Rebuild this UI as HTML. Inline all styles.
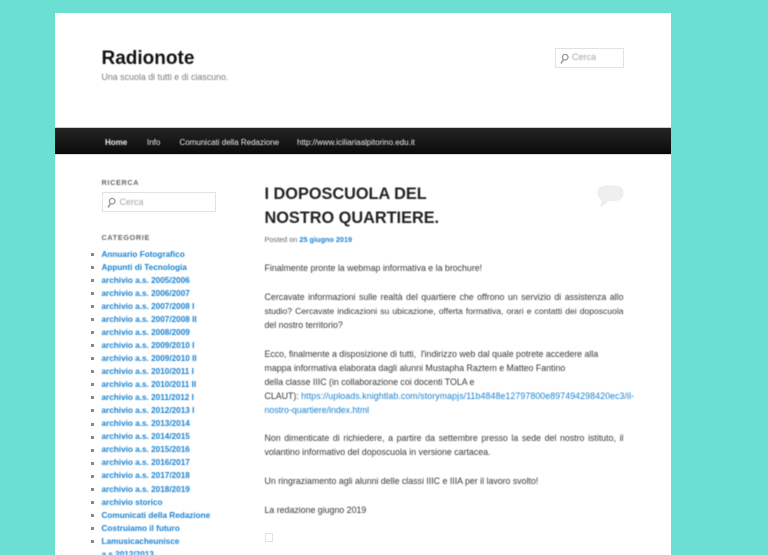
<!DOCTYPE html>
<html><head><meta charset="utf-8"><style>
html,body{margin:0;padding:0;width:768px;height:555px;overflow:hidden;background:#6adfd2;font-family:"Liberation Sans",Arial,sans-serif;}
#r{position:absolute;left:0;top:0;width:768px;height:555px;overflow:hidden;}
#w{position:absolute;left:55px;top:13px;width:615.5px;height:542px;background:#fff;}
.t{position:absolute;white-space:nowrap;filter:blur(.4px);}
.p{position:absolute;left:264.5px;width:359px;font-size:8.8px;line-height:14.5px;color:#373737;white-space:nowrap;filter:blur(.4px);}
.j{white-space:normal;text-align:justify;text-align-last:justify;}
a{color:#1982d1;text-decoration:none;}
#nav{position:absolute;left:55px;top:127px;width:615.5px;height:28px;background:linear-gradient(#252525,#0a0a0a);border-top:1px solid #ccc;border-bottom:1px solid #ddd;box-sizing:border-box;}
.n{position:absolute;top:136.5px;font-size:8px;line-height:11px;color:#eee;white-space:nowrap;filter:blur(.4px);}
.box{position:absolute;box-sizing:border-box;border:1px solid #e2e2e2;background:#fff;}
.h{position:absolute;left:101.5px;font-size:7.2px;font-weight:bold;letter-spacing:.7px;color:#666;line-height:10px;filter:blur(.4px);}
.l{position:absolute;left:101.5px;margin-top:.8px;font-size:8.2px;font-weight:bold;color:#1982d1;line-height:12px;white-space:nowrap;filter:blur(.4px);}
.b{position:absolute;left:91px;width:3px;height:3px;background:#888;}
.c{position:absolute;font-size:9px;line-height:11px;color:#a5a5a5;filter:blur(.4px);}
</style></head><body><div id="r">
<div id="w"></div>
<div class="t" style="left:101.5px;top:46.500px;font-size:19px;font-weight:bold;line-height:24px;color:#111;">Radionote</div>
<div class="t" style="left:101.5px;top:70.5px;font-size:8.85px;line-height:12px;color:#7a7a7a;">Una scuola di tutti e di ciascuno.</div>
<div class="box" style="left:555px;top:48px;width:69px;height:20px;"></div>
<svg style="position:absolute;left:559px;top:52.5px" width="11" height="12" viewBox="0 0 11 12"><circle cx="6.2" cy="4.2" r="2.8" fill="none" stroke="#999" stroke-width="1.3"/><path d="M4.3 6.8L2 10.5" stroke="#999" stroke-width="1.6"/></svg>
<div class="c" style="left:572px;top:52px;">Cerca</div>
<div id="nav"></div>
<div class="n" style="left:105px;font-weight:bold;">Home</div>
<div class="n" style="left:147px;">Info</div>
<div class="n" style="left:179.5px;">Comunicati della Redazione</div>
<div class="n" style="left:297px;">http://www.iciliariaalpitorino.edu.it</div>

<div class="h" style="top:178px;">RICERCA</div>
<div class="box" style="left:101.5px;top:192px;width:114px;height:19.5px;"></div>
<svg style="position:absolute;left:106px;top:196.5px" width="11" height="12" viewBox="0 0 11 12"><circle cx="6.2" cy="4.2" r="2.8" fill="none" stroke="#999" stroke-width="1.3"/><path d="M4.3 6.8L2 10.5" stroke="#999" stroke-width="1.6"/></svg>
<div class="c" style="left:119.5px;top:196.5px;">Cerca</div>
<div class="h" style="top:233px;">CATEGORIE</div>

<div class="b" style="top:252.5px"></div><div class="l" style="top:248px">Annuario Fotografico</div>
<div class="b" style="top:265.5px"></div><div class="l" style="top:261px">Appunti di Tecnologia</div>
<div class="b" style="top:278.5px"></div><div class="l" style="top:274px">archivio a.s. 2005/2006</div>
<div class="b" style="top:291.5px"></div><div class="l" style="top:287px">archivio a.s. 2006/2007</div>
<div class="b" style="top:304.5px"></div><div class="l" style="top:300px">archivio a.s. 2007/2008 I</div>
<div class="b" style="top:317.5px"></div><div class="l" style="top:313px">archivio a.s. 2007/2008 II</div>
<div class="b" style="top:331px"></div><div class="l" style="top:326px">archivio a.s. 2008/2009</div>
<div class="b" style="top:344px"></div><div class="l" style="top:339px">archivio a.s. 2009/2010 I</div>
<div class="b" style="top:357px"></div><div class="l" style="top:352px">archivio a.s. 2009/2010 II</div>
<div class="b" style="top:370px"></div><div class="l" style="top:365px">archivio a.s. 2010/2011 I</div>
<div class="b" style="top:383px"></div><div class="l" style="top:378.5px">archivio a.s. 2010/2011 II</div>
<div class="b" style="top:396px"></div><div class="l" style="top:391.5px">archivio a.s. 2011/2012 I</div>
<div class="b" style="top:409px"></div><div class="l" style="top:404.5px">archivio a.s. 2012/2013 I</div>
<div class="b" style="top:422.5px"></div><div class="l" style="top:417.5px">archivio a.s. 2013/2014</div>
<div class="b" style="top:435.5px"></div><div class="l" style="top:430.5px">archivio a.s. 2014/2015</div>
<div class="b" style="top:448.5px"></div><div class="l" style="top:443.5px">archivio a.s. 2015/2016</div>
<div class="b" style="top:461.5px"></div><div class="l" style="top:456.5px">archivio a.s. 2016/2017</div>
<div class="b" style="top:474.5px"></div><div class="l" style="top:469.5px">archivio a.s. 2017/2018</div>
<div class="b" style="top:487.5px"></div><div class="l" style="top:483px">archivio a.s. 2018/2019</div>
<div class="b" style="top:501px"></div><div class="l" style="top:496px">archivio storico</div>
<div class="b" style="top:514px"></div><div class="l" style="top:509px">Comunicati della Redazione</div>
<div class="b" style="top:527px"></div><div class="l" style="top:522px">Costruiamo il futuro</div>
<div class="b" style="top:540px"></div><div class="l" style="top:535px">Lamusicacheunisce</div>
<div class="l" style="top:548px;">a.s 2012/2013</div>

<div class="t" style="left:264.5px;top:182px;font-size:16.3px;font-weight:bold;line-height:24px;color:#222;">I DOPOSCUOLA DEL</div>
<div class="t" style="left:264.5px;top:206px;font-size:16.3px;font-weight:bold;line-height:24px;color:#222;">NOSTRO QUARTIERE.</div>
<svg style="position:absolute;left:597px;top:185px" width="27" height="23" viewBox="0 0 27 23"><path d="M9 1H18C23 1 26 4 26 8C26 12.500 23 15.500 18 15.500H11C9.500 18 7 20 3.500 21.500C5 19 5.200 17 4.500 14.500C2.300 13 1 11 1 8C1 4 4 1 9 1Z" fill="#efefef" stroke="#e6e6e6" stroke-width=".6"/></svg>
<div class="t" style="left:264.5px;top:235px;font-size:7.3px;line-height:10px;color:#666;">Posted on <a style="font-weight:bold">25 giugno 2019</a></div>

<div class="p" style="top:260.5px;">Finalmente pronte la webmap informativa e la brochure!</div>
<div class="p j" style="top:290px;">Cercavate informazioni sulle realtà del quartiere che offrono un servizio di assistenza allo</div>
<div class="p j" style="top:304px;font-size:8.55px;">studio? Cercavate indicazioni su ubicazione, offerta formativa, orari e contatti dei doposcuola</div>
<div class="p" style="top:318px;">del nostro territorio?</div>
<div class="p" style="top:346.5px;">Ecco, finalmente a disposizione di tutti,&nbsp; l'indirizzo web dal quale potrete accedere alla</div>
<div class="p" style="top:360.5px;">mappa informativa elaborata dagli alunni Mustapha Raztem e Matteo Fantino</div>
<div class="p" style="top:374.5px;">della classe IIIC (in collaborazione coi docenti TOLA e</div>
<div class="p" style="top:389px;">CLAUT): <a style="letter-spacing:.09px;">https://uploads.knightlab.com/storymapjs/11b4848e12797800e897494298420ec3/il-</a></div>
<div class="p" style="top:402.5px;"><a>nostro-quartiere/index.html</a></div>
<div class="p j" style="top:431px;">Non dimenticate di richiedere, a partire da settembre presso la sede del nostro istituto, il</div>
<div class="p" style="top:445px;">volantino informativo del doposcuola in versione cartacea.</div>
<div class="p" style="top:473.5px;">Un ringraziamento agli alunni delle classi IIIC e IIIA per il lavoro svolto!</div>
<div class="p" style="top:503px;">La redazione giugno 2019</div>
<div class="box" style="left:264.5px;top:533px;width:8.500px;height:8.500px;"></div>
</div></body></html>
